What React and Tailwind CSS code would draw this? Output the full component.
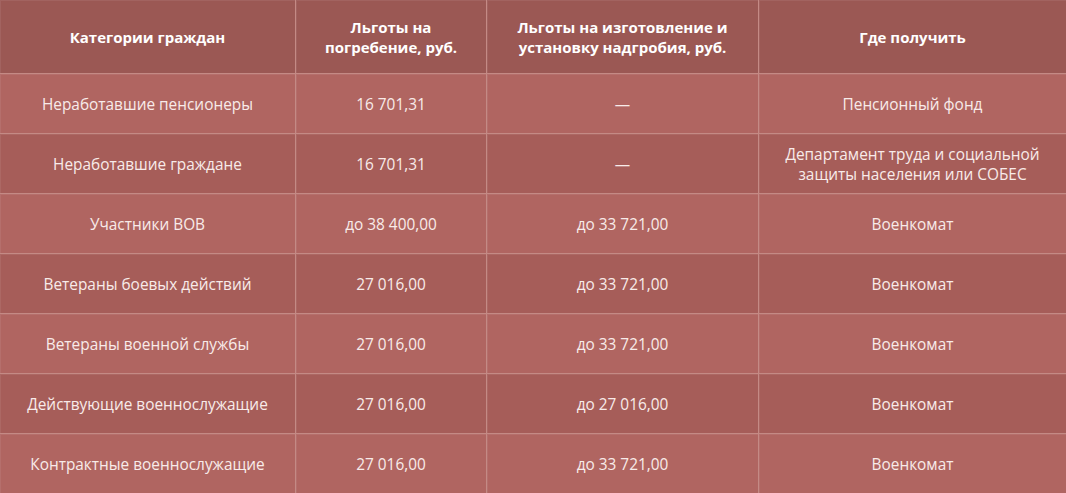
import React from "react";

const rows = [
  ["Неработавшие пенсионеры", "16 701,31", "—", "Пенсионный фонд"],
  ["Неработавшие граждане", "16 701,31", "—", "Департамент труда и социальной\nзащиты населения или СОБЕС"],
  ["Участники ВОВ", "до 38 400,00", "до 33 721,00", "Военкомат"],
  ["Ветераны боевых действий", "27 016,00", "до 33 721,00", "Военкомат"],
  ["Ветераны военной службы", "27 016,00", "до 33 721,00", "Военкомат"],
  ["Действующие военнослужащие", "27 016,00", "до 27 016,00", "Военкомат"],
  ["Контрактные военнослужащие", "27 016,00", "до 33 721,00", "Военкомат"],
];

const headers = [
  "Категории граждан",
  "Льготы на\nпогребение, руб.",
  "Льготы на изготовление и\nустановку надгробия, руб.",
  "Где получить",
];

const cell =
  "flex items-center justify-center text-center whitespace-pre-line border-r border-b border-[#c48a85] shadow-[inset_1px_1px_0_rgba(255,255,255,0.07)] px-2";

export default function App() {
  return (
    <div
      className="w-[1066px] h-[493px] overflow-hidden leading-[20px] text-[#f8ebe9]"
      style={{ fontFamily: '"Open Sans", "Noto Sans", sans-serif' }}
    >
      <div className="grid grid-cols-[296px_191px_272px_307px]">
        {headers.map((h, i) => (
          <div
            key={i}
            className={`${cell} h-[74px] bg-[#9b5854] text-[15px] font-bold text-white ${i === 3 ? "border-r-0" : ""}`}
          >
            {h}
          </div>
        ))}
        {rows.map((r, ri) =>
          r.map((c, ci) => (
            <div
              key={`${ri}-${ci}`}
              className={`${cell} h-[60px] pt-[2px] text-[15.4px] ${ri % 2 === 0 ? "bg-[#b06561]" : "bg-[#a65d59]"} ${ci === 3 ? "border-r-0" : ""}`}
            >
              {c}
            </div>
          ))
        )}
      </div>
    </div>
  );
}
